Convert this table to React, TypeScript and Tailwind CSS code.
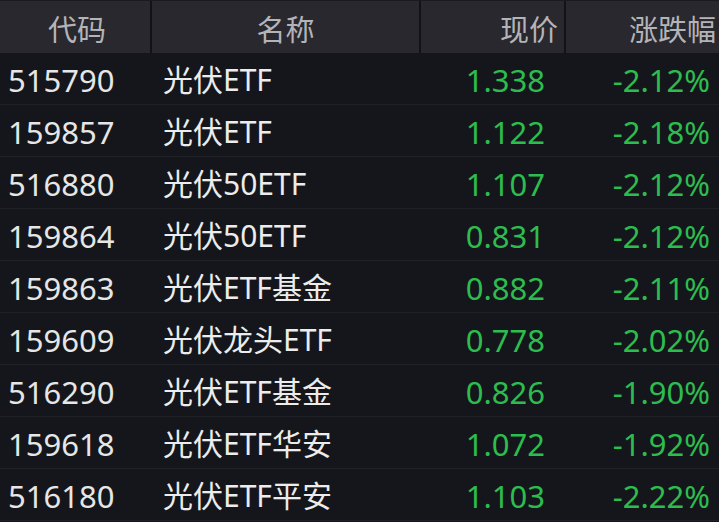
import React from "react";

const rows = [
  ["515790", "光伏ETF", "1.338", "-2.12%"],
  ["159857", "光伏ETF", "1.122", "-2.18%"],
  ["516880", "光伏50ETF", "1.107", "-2.12%"],
  ["159864", "光伏50ETF", "0.831", "-2.12%"],
  ["159863", "光伏ETF基金", "0.882", "-2.11%"],
  ["159609", "光伏龙头ETF", "0.778", "-2.02%"],
  ["516290", "光伏ETF基金", "0.826", "-1.90%"],
  ["159618", "光伏ETF华安", "1.072", "-1.92%"],
  ["516180", "光伏ETF平安", "1.103", "-2.22%"],
];

const cjk = { fontFamily: '"Noto Sans CJK SC", "Noto Sans", sans-serif' };
const latin = { fontFamily: '"Noto Sans", "Noto Sans CJK SC", sans-serif' };

export default function App() {
  return (
    <div className="w-[719px] h-[522px] overflow-hidden bg-[#14161b] text-[29px]" style={cjk}>
      {/* header */}
      <div className="grid grid-cols-[152px_269px_145px_153px] h-[53px] bg-[#28282e] text-[#b4b4b8] border-t border-[#1a1a1f]">
        <div className="flex items-center justify-center pl-1 pt-[3px] border-r-2 border-[#131317]">代码</div>
        <div className="flex items-center justify-center pt-[3px] border-r-2 border-[#131317]">名称</div>
        <div className="flex items-center justify-end pr-[6px] pt-[3px] border-r-2 border-[#131317]">现价</div>
        <div className="flex items-center justify-end pr-[3px] pt-[3px]">涨跌幅</div>
      </div>
      {rows.map((r, i) => (
        <div
          key={i}
          className="grid grid-cols-[152px_269px_145px_153px] h-[52px] pt-[3px] border-b border-[#1f2127] leading-none"
          style={latin}
        >
          <div className="flex items-center pl-[8px] text-[31px] text-[#e6e6e6]">{r[0]}</div>
          <div className="flex items-center pl-[11px] text-[30px] text-[#ececec]">{r[1]}</div>
          <div className="flex items-center justify-end pr-[21px] text-[31px] text-[#2dbd4f]">{r[2]}</div>
          <div className="flex items-center justify-end pr-[9px] text-[31px] text-[#2dbd4f]">{r[3]}</div>
        </div>
      ))}
    </div>
  );
}
